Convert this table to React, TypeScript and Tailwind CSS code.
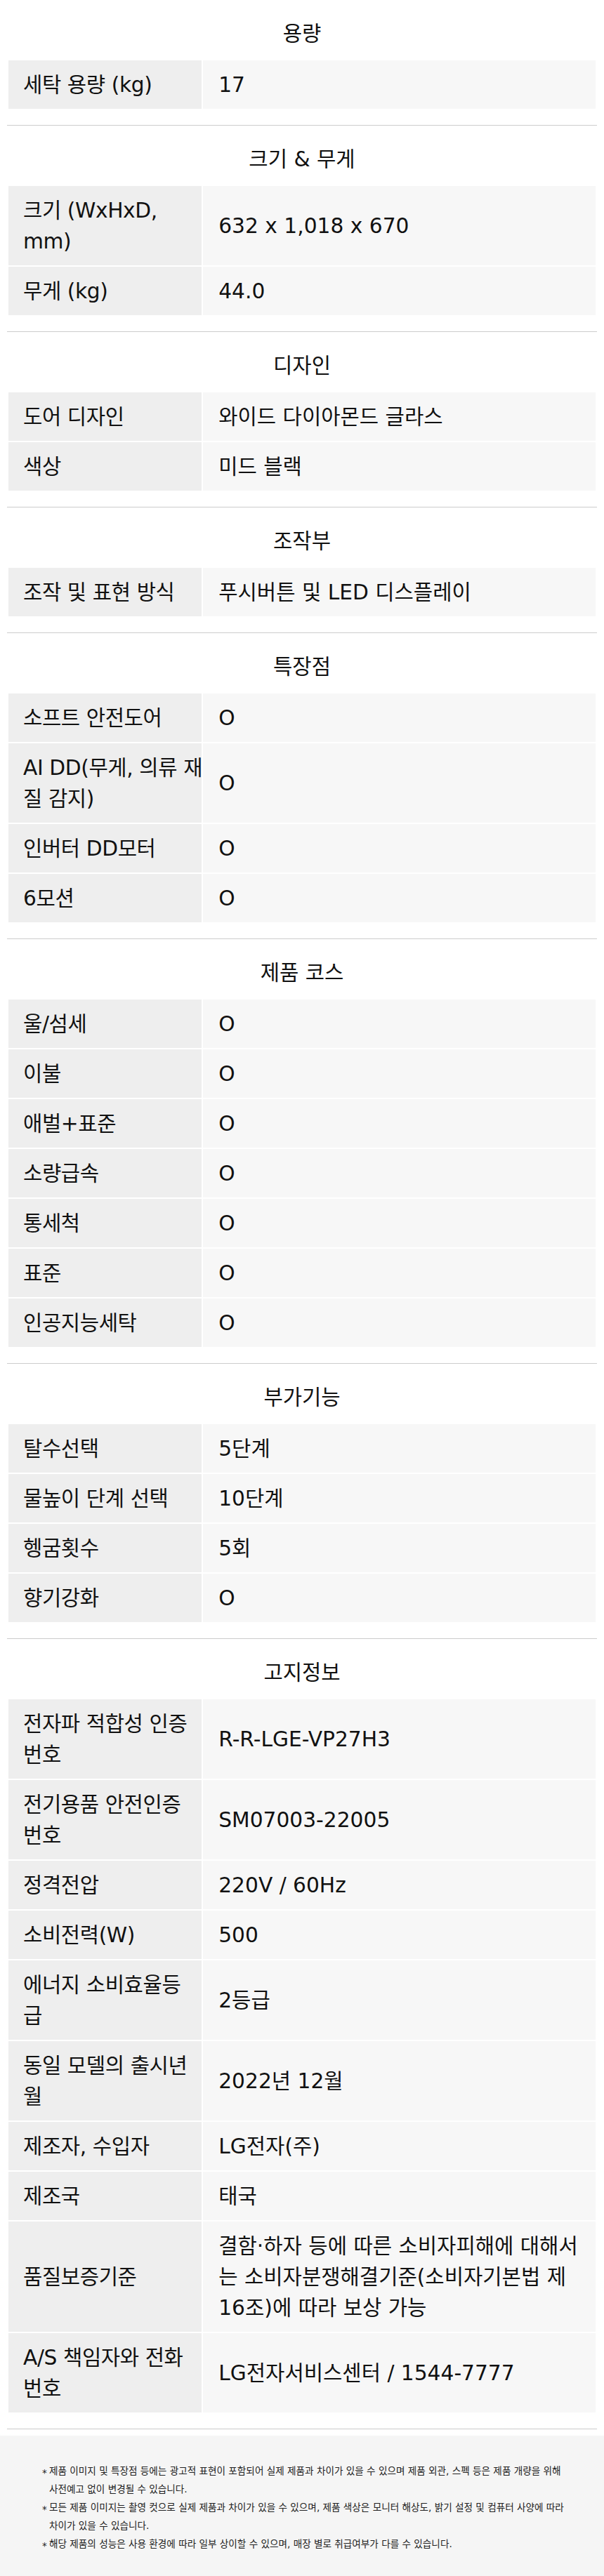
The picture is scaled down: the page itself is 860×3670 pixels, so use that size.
const sections: { title: string; rows: [string, string][] }[] = [
  { title: '용량', rows: [['세탁 용량 (kg)', '17']] },
  {
    title: '크기 & 무게',
    rows: [
      ['크기 (WxHxD,\nmm)', '632 x 1,018 x 670'],
      ['무게 (kg)', '44.0'],
    ],
  },
  {
    title: '디자인',
    rows: [
      ['도어 디자인', '와이드 다이아몬드 글라스'],
      ['색상', '미드 블랙'],
    ],
  },
  { title: '조작부', rows: [['조작 및 표현 방식', '푸시버튼 및 LED 디스플레이']] },
  {
    title: '특장점',
    rows: [
      ['소프트 안전도어', 'O'],
      ['AI DD(무게, 의류 재\n질 감지)', 'O'],
      ['인버터 DD모터', 'O'],
      ['6모션', 'O'],
    ],
  },
  {
    title: '제품 코스',
    rows: [
      ['울/섬세', 'O'],
      ['이불', 'O'],
      ['애벌+표준', 'O'],
      ['소량급속', 'O'],
      ['통세척', 'O'],
      ['표준', 'O'],
      ['인공지능세탁', 'O'],
    ],
  },
  {
    title: '부가기능',
    rows: [
      ['탈수선택', '5단계'],
      ['물높이 단계 선택', '10단계'],
      ['헹굼횟수', '5회'],
      ['향기강화', 'O'],
    ],
  },
  {
    title: '고지정보',
    rows: [
      ['전자파 적합성 인증\n번호', 'R-R-LGE-VP27H3'],
      ['전기용품 안전인증\n번호', 'SM07003-22005'],
      ['정격전압', '220V / 60Hz'],
      ['소비전력(W)', '500'],
      ['에너지 소비효율등\n급', '2등급'],
      ['동일 모델의 출시년\n월', '2022년 12월'],
      ['제조자, 수입자', 'LG전자(주)'],
      ['제조국', '태국'],
      ['품질보증기준', '결함·하자 등에 따른 소비자피해에 대해서\n는 소비자분쟁해결기준(소비자기본법 제\n16조)에 따라 보상 가능'],
      ['A/S 책임자와 전화\n번호', 'LG전자서비스센터 / 1544-7777'],
    ],
  },
]

const notes = [
  '제품 이미지 및 특장점 등에는 광고적 표현이 포함되어 실제 제품과 차이가 있을 수 있으며 제품 외관, 스펙 등은 제품 개량을 위해 사전예고 없이 변경될 수 있습니다.',
  '모든 제품 이미지는 촬영 컷으로 실제 제품과 차이가 있을 수 있으며, 제품 색상은 모니터 해상도, 밝기 설정 및 컴퓨터 사양에 따라 차이가 있을 수 있습니다.',
  '해당 제품의 성능은 사용 환경에 따라 일부 상이할 수 있으며, 매장 별로 취급여부가 다를 수 있습니다.',
]

const App = () => {
  return (
    <div className="w-full bg-white text-[#111] font-['DejaVu_Sans','Noto_Sans_CJK_KR',sans-serif]">
      <div className="px-[10px]">
        {sections.map((s) => (
          <div key={s.title} className="pt-[26px] pb-[21px] border-b border-[#cccccc]">
            <h2 className="text-center text-[29.7px] leading-[44px] font-normal mb-[14px]">{s.title}</h2>
            <table className="w-full table-fixed border-separate border-spacing-[2px] text-[29.7px] leading-[44px]">
              <tbody>
                {s.rows.map(([label, value]) => (
                  <tr key={label}>
                    <td className="w-[33%] bg-[#eeeeee] pl-[21px] pr-0 py-[12.5px] align-middle whitespace-pre tracking-[-0.4px]">{label}</td>
                    <td className="bg-[#f7f7f7] pl-[22px] pr-[20px] py-[12.5px] align-middle whitespace-pre-line">{value}</td>
                  </tr>
                ))}
              </tbody>
            </table>
          </div>
        ))}
      </div>
      <div className="mt-[9px] bg-[#f5f5f5] pt-[37px] pb-[34px] pl-[60px] pr-[45px]">
        <ul className="text-[13.6px] leading-[26px] text-[#222]">
          {notes.map((n) => (
            <li key={n} className="flex">
              <span className="relative top-[3px] w-[10px] shrink-0">*</span>
              <span>{n}</span>
            </li>
          ))}
        </ul>
      </div>
    </div>
  )
}

export default App
